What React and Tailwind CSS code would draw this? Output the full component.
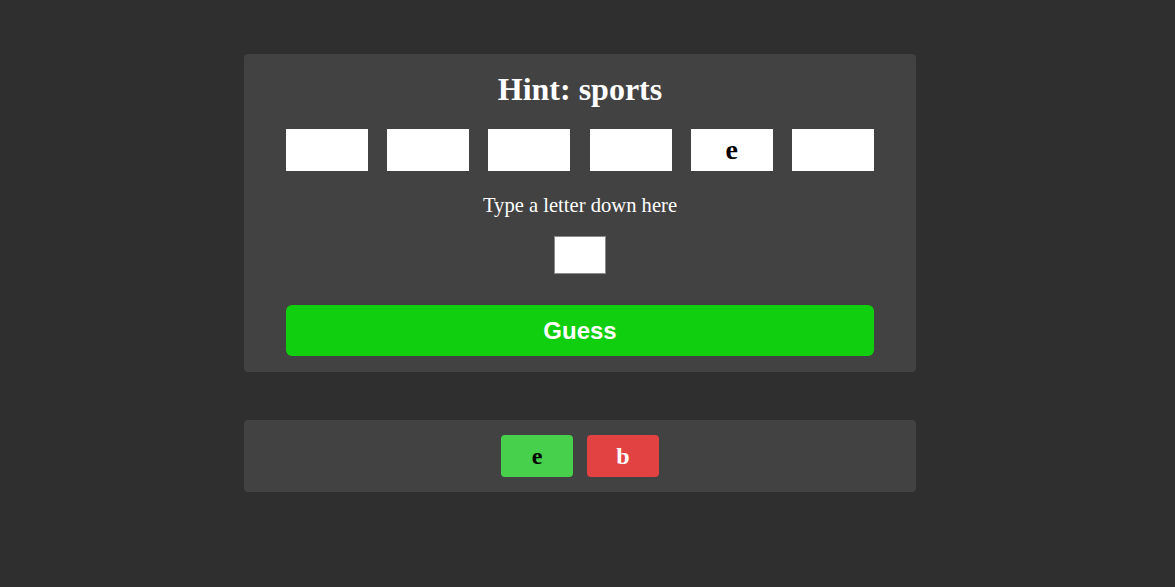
export default function App() {
  const slots = ['', '', '', '', 'e', ''];
  return (
    <div className="min-h-[587px] w-full bg-[#2f2f2f] pt-[54px] font-['Liberation_Serif',serif]">
      <div className="w-[1160px]">
        <section className="mx-auto flex w-[672px] flex-col items-center rounded-[4px] bg-[#424242] px-[42px] pb-[16px] pt-[17px]">
          <h1 className="text-[32px] font-bold leading-[37px] text-white">Hint: sports</h1>

          <div className="mt-[21px] flex w-full justify-between">
            {slots.map((ch, i) => (
              <div
                key={i}
                className="flex h-[42px] w-[82px] items-center justify-center bg-white text-[28px] font-bold leading-none text-black"
              >
                {ch}
              </div>
            ))}
          </div>

          <p className="mt-[23px] text-[20.6px] leading-[23px] text-white">Type a letter down here</p>

          <input
            type="text"
            maxLength={1}
            className="mt-[19px] h-[38px] w-[52px] border border-[#8a8a8a] bg-white text-center text-[20px] text-black outline-none"
          />

          <button className="mt-[31px] h-[51px] w-full rounded-[6px] bg-[#0fcf0f] font-['Liberation_Sans',Arial,sans-serif] text-[24px] font-bold text-white">
            Guess
          </button>
        </section>

        <section className="mx-auto mt-[48px] flex w-[672px] justify-center gap-[14px] rounded-[4px] bg-[#424242] py-[15px]">
          <div className="flex h-[42px] w-[72px] items-center justify-center rounded-[4px] bg-[#47d04c] text-[24px] font-bold text-black">
            e
          </div>
          <div className="flex h-[42px] w-[72px] items-center justify-center rounded-[4px] bg-[#e34242] text-[24px] font-bold text-white">
            b
          </div>
        </section>
      </div>
    </div>
  );
}
